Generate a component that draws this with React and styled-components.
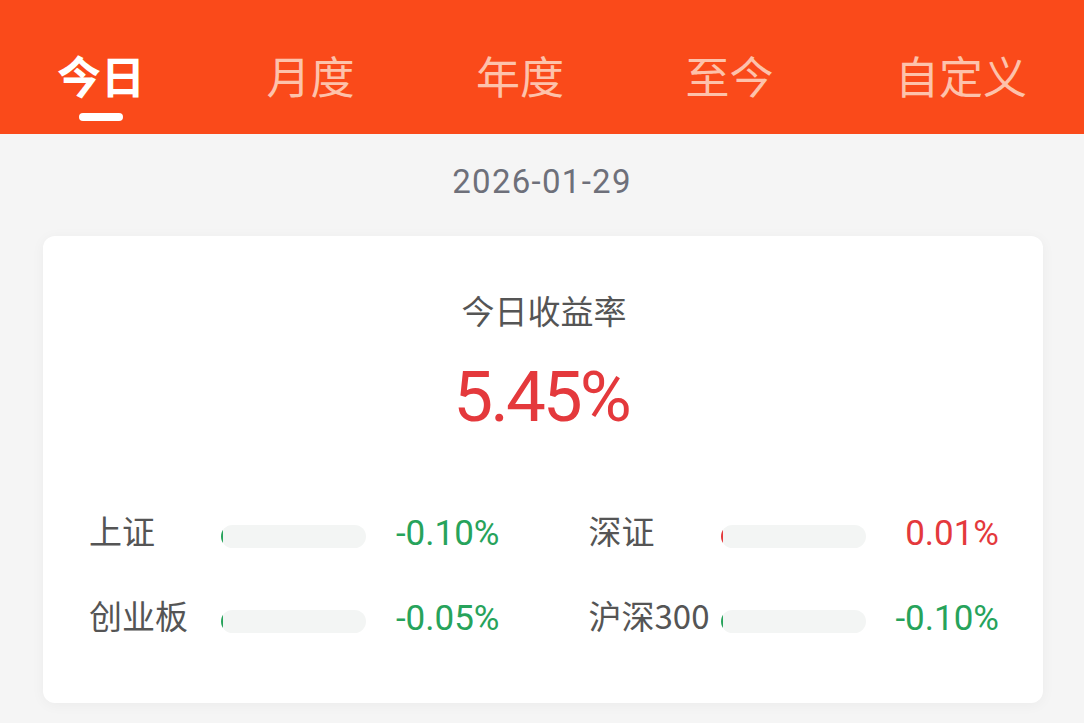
import React from "react";
import styled, { createGlobalStyle } from "styled-components";

const Global = createGlobalStyle`
  html, body { margin: 0; padding: 0; background: #f5f5f5; }
  body { font-family: "Noto Sans CJK SC", "Noto Sans", sans-serif; }
  * { box-sizing: border-box; }
`;

const Page = styled.div`
  width: 1084px;
  min-height: 723px;
  background: #f5f5f5;
  overflow: hidden;
`;

const Header = styled.div`
  height: 134px;
  background: #fa4a1a;
  display: flex;
  justify-content: space-between;
  align-items: flex-start;
  padding: 49px 57px 0 57px;
`;

const Tab = styled.div`
  display: flex;
  flex-direction: column;
  align-items: center;
`;

const TabText = styled.div`
  font-family: "Noto Sans CJK SC", sans-serif;
  font-size: 44px;
  line-height: 52px;
  font-weight: ${(p) => (p.$active ? 700 : 400)};
  color: ${(p) => (p.$active ? "#ffffff" : "#fdc2ab")};
  white-space: nowrap;
`;

const Indicator = styled.div`
  width: 44px;
  height: 8px;
  border-radius: 4px;
  background: #ffffff;
  margin-top: 12px;
  visibility: ${(p) => (p.$show ? "visible" : "hidden")};
`;

const DateLine = styled.div`
  margin-top: 28px;
  height: 40px;
  line-height: 40px;
  text-align: center;
  font-family: Roboto, "Noto Sans", sans-serif;
  font-size: 33px;
  letter-spacing: 1.3px;
  color: #6e707a;
`;

const Card = styled.div`
  margin: 34px 41px 0 43px;
  background: #ffffff;
  border-radius: 12px;
  box-shadow: 0 2px 14px rgba(0, 0, 0, 0.045);
  padding: 54px 44px 57px 46px;
`;

const Title = styled.div`
  text-align: center;
  font-size: 33px;
  line-height: 40px;
  color: #555555;
`;

const BigValue = styled.div`
  margin-top: 27px;
  padding-right: 6px;
  text-align: center;
  font-family: Roboto, "Noto Sans", sans-serif;
  font-size: 71px;
  line-height: 80px;
  letter-spacing: -3px;
  color: #e4393c;
`;

const Grid = styled.div`
  margin-top: 74px;
  display: grid;
  grid-template-columns: 1fr 1fr;
  column-gap: 89px;
  row-gap: 35px;
`;

const Row = styled.div`
  display: flex;
  align-items: center;
  height: 50px;
`;

const Label = styled.div`
  width: 132px;
  flex: none;
  font-size: 33px;
  line-height: 50px;
  padding-bottom: 13px;
  color: #555555;
  white-space: nowrap;
  font-family: "Noto Sans CJK SC", sans-serif;
`;

const Bar = styled.div`
  width: 145px;
  height: 23px;
  flex: none;
  border-radius: 12px;
  background: #f3f5f4;
  overflow: hidden;
  display: flex;
`;

const Fill = styled.div`
  height: 100%;
  background: ${(p) => (p.$up ? "#e4393c" : "#27a35b")};
`;

const Value = styled.div`
  flex: 1;
  text-align: right;
  font-family: Roboto, "Noto Sans", sans-serif;
  font-size: 35px;
  line-height: 50px;
  padding-bottom: 5px;
  color: ${(p) => (p.$up ? "#e4393c" : "#27a35b")};
`;

const tabs = ["今日", "月度", "年度", "至今", "自定义"];

const indices = [
  { name: "上证", value: -0.1, text: "-0.10%" },
  { name: "深证", value: 0.01, text: "0.01%" },
  { name: "创业板", value: -0.05, text: "-0.05%" },
  { name: "沪深300", value: -0.1, text: "-0.10%" },
];

export default function App() {
  return (
    <Page>
      <Global />
      <Header>
        {tabs.map((t, i) => (
          <Tab key={t}>
            <TabText $active={i === 0}>{t}</TabText>
            <Indicator $show={i === 0} />
          </Tab>
        ))}
      </Header>
      <DateLine>2026-01-29</DateLine>
      <Card>
        <Title>今日收益率</Title>
        <BigValue>5.45%</BigValue>
        <Grid>
          {indices.map((it) => {
            const up = it.value >= 0;
            return (
              <Row key={it.name}>
                <Label>{it.name}</Label>
                <Bar>
                  <Fill $up={up} style={{ width: `${Math.max(2, Math.abs(it.value) * 10)}px` }} />
                </Bar>
                <Value $up={up}>{it.text}</Value>
              </Row>
            );
          })}
        </Grid>
      </Card>
    </Page>
  );
}
